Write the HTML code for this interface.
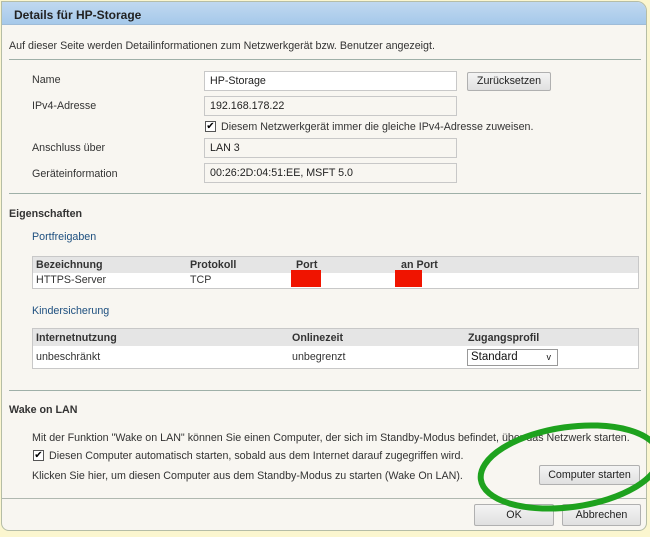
<!DOCTYPE html>
<html><head><meta charset="utf-8"><style>
*{box-sizing:border-box;margin:0;padding:0}
body{width:650px;height:537px;background:#fbf6cf;font-family:"Liberation Sans",sans-serif;font-size:10.7px;color:#333;position:relative;overflow:hidden}
.panel{position:absolute;left:1px;top:1px;width:646px;height:530px;background:#f8f6f1;border:1px solid #b5bda6;border-radius:0 10px 8px 8px;overflow:hidden}
.hdr{position:absolute;left:0;top:0;right:0;height:23px;background:linear-gradient(#c0d8f0,#a6c9ea);border-bottom:1px solid #9fbcd8}
.t{position:absolute;white-space:nowrap;line-height:14px}
.b{font-weight:bold}
.blue{color:#1d4f7f}
.line{position:absolute;height:1px;background:#9fb0a8}
.inp{position:absolute;background:#f8f6f1;border:1px solid #c8c8c8;padding-left:5px;line-height:18px;color:#222}
.btn{position:absolute;background:linear-gradient(#f4f4f4,#e0e0e0);border:1px solid #b0b0b0;text-align:center;color:#222;border-radius:2px}
.cb{position:absolute;width:11px;height:11px;border:1px solid #555;background:#fff;font-size:10px;line-height:9px;text-align:center;color:#000}
.tbl{position:absolute;border:1px solid #c8c8c8;background:#fff}
.th{position:absolute;left:0;right:0;top:0;background:#e5e5e5}
</style></head><body>
<div class="panel">
<div class="hdr"></div>
<div class="t b" style="left:12px;top:6px;font-size:12px;color:#222">Details für HP-Storage</div>
<div class="t" style="left:7px;top:37px">Auf dieser Seite werden Detailinformationen zum Netzwerkgerät bzw. Benutzer angezeigt.</div>
<div class="line" style="left:7px;top:57px;width:632px"></div>

<div class="t" style="left:30px;top:71px">Name</div>
<div class="inp" style="left:202px;top:69px;width:253px;height:20px;background:#fff">HP-Storage</div>
<div class="btn" style="left:465px;top:70px;width:84px;height:19px;line-height:17px">Zurücksetzen</div>
<div class="t" style="left:30px;top:97px">IPv4-Adresse</div>
<div class="inp" style="left:202px;top:94px;width:253px;height:20px">192.168.178.22</div>
<div class="cb" style="left:203px;top:119px">✔</div>
<div class="t" style="left:219px;top:118px">Diesem Netzwerkgerät immer die gleiche IPv4-Adresse zuweisen.</div>
<div class="t" style="left:30px;top:139px">Anschluss über</div>
<div class="inp" style="left:202px;top:136px;width:253px;height:20px">LAN 3</div>
<div class="t" style="left:30px;top:165px">Geräteinformation</div>
<div class="inp" style="left:202px;top:161px;width:253px;height:20px">00:26:2D:04:51:EE, MSFT 5.0</div>
<div class="line" style="left:7px;top:191px;width:632px"></div>

<div class="t b" style="left:7px;top:205px">Eigenschaften</div>
<div class="t blue" style="left:30px;top:228px">Portfreigaben</div>
<div class="tbl" style="left:30px;top:254px;width:607px;height:33px">
<div class="th" style="height:16px"></div>
<div class="t b" style="left:3px;top:1px">Bezeichnung</div>
<div class="t b" style="left:157px;top:1px">Protokoll</div>
<div class="t b" style="left:263px;top:1px">Port</div>
<div class="t b" style="left:368px;top:1px">an Port</div>
<div class="t" style="left:3px;top:16px">HTTPS-Server</div>
<div class="t" style="left:157px;top:16px">TCP</div>
<div style="position:absolute;left:258px;top:13px;width:30px;height:17px;background:#f01400"></div>
<div style="position:absolute;left:362px;top:13px;width:27px;height:17px;background:#f01400"></div>
</div>
<div class="t blue" style="left:30px;top:302px">Kindersicherung</div>
<div class="tbl" style="left:30px;top:326px;width:607px;height:41px">
<div class="th" style="height:17px"></div>
<div class="t b" style="left:3px;top:2px">Internetnutzung</div>
<div class="t b" style="left:259px;top:2px">Onlinezeit</div>
<div class="t b" style="left:435px;top:2px">Zugangsprofil</div>
<div class="t" style="left:3px;top:21px">unbeschränkt</div>
<div class="t" style="left:259px;top:21px">unbegrenzt</div>
<div style="position:absolute;left:434px;top:20px;width:91px;height:17px;border:1px solid #999;background:#fff;color:#111;font-size:11.5px;line-height:15px;padding-left:3px">Standard<span style="position:absolute;right:6px;font-size:9px">v</span></div>
</div>
<div class="line" style="left:7px;top:388px;width:632px"></div>

<div class="t b" style="left:7px;top:401px">Wake on LAN</div>
<div class="t" style="left:30px;top:429px">Mit der Funktion "Wake on LAN" können Sie einen Computer, der sich im Standby-Modus befindet, über das Netzwerk starten.</div>
<div class="cb" style="left:31px;top:448px">✔</div>
<div class="t" style="left:47px;top:447px">Diesen Computer automatisch starten, sobald aus dem Internet darauf zugegriffen wird.</div>
<div class="t" style="left:30px;top:467px">Klicken Sie hier, um diesen Computer aus dem Standby-Modus zu starten (Wake On LAN).</div>
<div class="btn" style="left:537px;top:463px;width:101px;height:20px;line-height:18px">Computer starten</div>
<div class="line" style="left:0;top:496px;width:646px;background:#b0b8b0"></div>
<div class="btn" style="left:472px;top:502px;width:80px;height:22px;line-height:20px">OK</div>
<div class="btn" style="left:560px;top:502px;width:79px;height:22px;line-height:20px">Abbrechen</div>
</div>
<svg style="position:absolute;left:0;top:0" width="650" height="537"><ellipse cx="570" cy="467" rx="90" ry="40" transform="rotate(-8 570 467)" fill="none" stroke="#1ea21e" stroke-width="6"/></svg>
</body></html>
